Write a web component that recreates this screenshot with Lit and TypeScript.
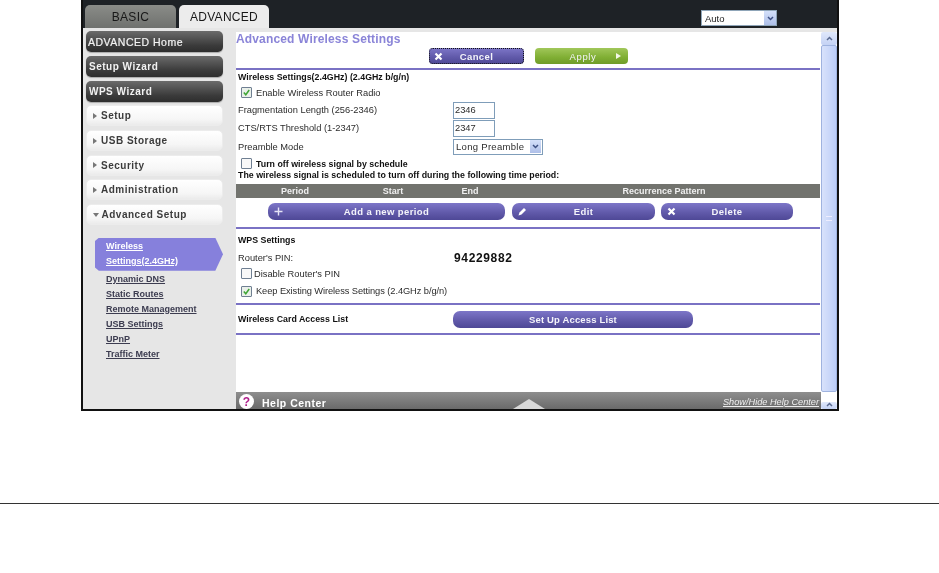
import { LitElement, html, css, svg } from "lit";
import { customElement } from "lit/decorators.js";

const X = svg`<svg class="ic" width="9" height="9" viewBox="0 0 9 9"><path d="M1.500 1.500l6 6M7.500 1.500l-6 6" stroke="#fff" stroke-width="2.200" fill="none"/></svg>`;
const TRI = svg`<svg class="ic" width="5" height="6" viewBox="0 0 5 6"><path d="M0 0l5 3L0 6z" fill="#f4f8e8"/></svg>`;
const PLUS = svg`<svg class="ic" width="9" height="9" viewBox="0 0 9 9"><path d="M4.500 0.500v8M0.500 4.500h8" stroke="#e6e4f6" stroke-width="1.400" fill="none"/></svg>`;
const PEN = svg`<svg class="ic" width="9" height="9" viewBox="0 0 9 9"><path d="M0.500 8.500l1-3L6 1l2 2-4.500 4.500z" fill="#fff"/></svg>`;
const CHECK = svg`<svg width="7" height="7" viewBox="0 0 7 7"><path d="M0.800 3.500l2 2.300L6.200 1" stroke="#3fa535" stroke-width="1.500" fill="none"/></svg>`;
const CHEV_D = svg`<svg width="7" height="5" viewBox="0 0 7 5"><path d="M1 1l2.500 2.500L6 1" stroke="#3c4f82" stroke-width="1.500" fill="none"/></svg>`;
const CHEV_U = svg`<svg width="7" height="5" viewBox="0 0 7 5"><path d="M1 4l2.500-2.500L6 4" stroke="#5a6a90" stroke-width="1.500" fill="none"/></svg>`;

@customElement("app-root")
export class AppRoot extends LitElement {
  static styles = css`
    :host { display: block; height: 573px; width: 939px; overflow: hidden; background: #fff; font-family: "Liberation Sans", Arial, sans-serif; color: #1c1c1c; }
    .frame { margin-left: 81px; width: 758px; height: 411px; box-sizing: border-box; border: solid #111; border-width: 0 2px 2px 2px; background: #e6e6e6; display: flex; flex-direction: column; overflow: hidden; filter: blur(0.3px); }
    .top { height: 28px; flex: none; background: #1e2226; display: flex; align-items: flex-end; padding-left: 2px; box-sizing: border-box; }
    .tab { height: 23px; box-sizing: border-box; border-radius: 5px 5px 0 0; font-size: 12px; display: flex; align-items: center; justify-content: center; letter-spacing: 0.300px; color: #181818; }
    .tab.basic { width: 91px; background: linear-gradient(#8a8c88, #6f716e); margin-right: 3px; }
    .tab.adv { width: 90px; background: #ececec; }
    .auto { margin-left: 432px; margin-bottom: 2px; width: 76px; height: 16px; box-sizing: border-box; border: 1px solid #8fa5b8; background: #fff; display: flex; align-items: center; justify-content: space-between; font-size: 9.500px; padding-left: 3px; }
    .drop { width: 12px; height: 14px; background: linear-gradient(#d4e0fa, #aebfe8); display: flex; align-items: center; justify-content: center; }
    .body { flex: 1; min-height: 0; display: flex; }
    .side { width: 153px; flex: none; padding: 3.200px 0 0 3px; box-sizing: border-box; display: flex; flex-direction: column; }
    .nav { width: 137px; height: 21px; box-sizing: border-box; border-radius: 5px; margin-bottom: 3.710px; flex: none; display: flex; align-items: center; font-size: 10px; font-weight: bold; letter-spacing: 0.500px; }
    .nav.dark { background: linear-gradient(#6b6b6b, #3a3a3a 70%, #2e2e2e); color: #f2f2f2; padding-left: 3px; box-shadow: 0 1px 1px #aaa; }
    .nav.dark.wide { font-weight: normal; font-size: 10.500px; letter-spacing: 0.500px; -webkit-text-stroke: 0.200px #f2f2f2; padding-left: 2px; }
    .nav.light { background: linear-gradient(#fff, #f6f6f6 70%, #ebebeb); color: #3c3c3c; border: 1px solid #ececec; padding-left: 6px; }
    .arrow { width: 0; height: 0; border-left: 4px solid #777; border-top: 3px solid transparent; border-bottom: 3px solid transparent; margin-right: 4px; }
    .arrow.open { border-top: 4px solid #777; border-left: 3px solid transparent; border-right: 3px solid transparent; border-bottom: 0; margin-right: 2.500px; }
    .sub { margin: 9px 0 0 9px; }
    .cur { width: 128px; height: 33px; background: #8680dc; clip-path: polygon(3% 0, 94% 0, 100% 50%, 94% 100%, 3% 100%, 0 90%, 0 10%); padding: 0 0 2px 11px; box-sizing: border-box; display: flex; flex-direction: column; justify-content: center; gap: 3px; color: #fff; font-size: 9px; font-weight: bold; line-height: 12px; text-decoration: underline; }
    .links { margin: 1px 0 0 11px; display: flex; flex-direction: column; }
    .links a { height: 15px; line-height: 15px; font-size: 9px; font-weight: bold; color: #3c3c50; text-decoration: underline; }
    .main { width: 585px; flex: none; margin-top: 4px; background: #fff; display: flex; flex-direction: column; position: relative; }
    .content { flex: 1; min-height: 0; padding-left: 2px; }
    h1 { margin: 0 0 0 -2px; height: 16px; line-height: 15px; font-size: 12px; font-weight: bold; color: #8a84d8; letter-spacing: 0.150px; white-space: nowrap; }
    .acts { height: 20px; display: flex; padding-left: 191px; gap: 11px; }
    .btn { height: 17px; box-sizing: border-box; border-radius: 4px; color: #f4f4fa; font-size: 9.500px; font-weight: bold; letter-spacing: 0.400px; display: flex; align-items: center; justify-content: center; position: relative; flex: none; background: linear-gradient(#7d76c8, #5f58a8 60%, #4e4896); }
    .btn .ic { position: absolute; left: 6px; top: 4px; }
    .btn.cancel { width: 95px; height: 16px; outline: 1px dotted #111; outline-offset: -1px; }
    .btn.cancel .ic { top: 3.500px; left: 5px; }
    .btn.apply { width: 93px; height: 16px; background: linear-gradient(#a1c75a, #7fae33 60%, #6f9c2a); font-weight: normal; letter-spacing: 0.600px; padding-left: 3px; }
    .btn.apply .ic { left: auto; right: 7px; top: 5px; }
    .hr { height: 2px; background: #7a72c4; flex: none; width: 584px; margin-left: -2px; }
    .row { display: flex; align-items: center; font-size: 9.300px; letter-spacing: 0; color: #2c2c2c; white-space: nowrap; box-sizing: border-box; }
    .row .lbl { width: 215px; flex: none; }
    .h-title { height: 14px; }
    .h-enable { height: 17px; }
    .h-frag { height: 18px; }
    .h-cts { height: 18px; }
    .h-pre { height: 19px; }
    .h-off { height: 15px; }
    .h-sched { height: 13px; padding-bottom: 5px; }
    .h-wps { height: 22px; }
    .h-pin { height: 13px; }
    .h-dis { height: 19px; }
    .h-keep { height: 16px; }
    .h-gap { height: 4px; }
    .h-card { height: 28px; }
    .shift { margin-left: -2px; }
    .keep { letter-spacing: -0.080px; }
    b, .row .bold { font-weight: bold; font-size: 8.800px; color: #111; letter-spacing: 0.020px; }
    .cb { width: 9px; height: 9px; border: 1px solid #6f7f92; background: #f8f8f8; flex: none; margin: 0 4px 0 3px; display: flex; align-items: center; justify-content: center; border-radius: 1px; }
    .cb.on { background: #eaf0ea; }
    .in { width: 42px; height: 17px; box-sizing: border-box; border: 1px solid #7f9db9; font-size: 9.300px; padding-left: 1px; display: flex; align-items: center; }
    .sel { width: 90px; height: 16px; box-sizing: border-box; border: 1px solid #7f9db9; display: flex; align-items: center; justify-content: space-between; padding-left: 2px; font-size: 9.500px; letter-spacing: 0.300px; }
    .sel .drop { width: 11px; height: 13px; margin-right: 1px; }
    .thead { height: 14px; background: #72736e; width: 584px; margin-left: -2px; display: grid; grid-template-columns: 118px 78px 76px 312px; color: #f0f0f0; font-size: 9px; font-weight: bold; text-align: center; line-height: 14px; }
    .btns { display: flex; height: 29px; padding: 5px 0 0 30px; box-sizing: border-box; }
    .btn.r { border-radius: 7px; }
    .w-add { width: 237px; margin-right: 7px; }
    .w-edit { width: 143px; margin-right: 6px; }
    .w-del { width: 132px; }
    .w-set { width: 240px; letter-spacing: 0.150px; }
    .pin { font-size: 12px; font-weight: bold; color: #111; letter-spacing: 0.650px; padding-left: 1px; }
    .bar { height: 17px; flex: none; background: linear-gradient(#8e8e8e, #6a6a6a); display: flex; align-items: center; color: #fff; position: relative; overflow: hidden; }
    .q { width: 15px; height: 15px; border-radius: 50%; background: #fff; color: #b0208c; font-size: 12px; font-weight: bold; display: flex; align-items: center; justify-content: center; margin: 2px 8px 0 3px; }
    .hc { font-size: 10.500px; font-weight: bold; letter-spacing: 0.500px; margin-top: 4px; }
    .tri { margin: 7px 0 0 187px; width: 0; height: 0; border-left: 16px solid transparent; border-right: 16px solid transparent; border-bottom: 10px solid #d8d8d8; }
    .sh { margin: 3px 2px 0 auto; font-size: 9.200px; font-style: italic; text-decoration: underline; color: #eee; }
    .scroll { width: 16px; flex: none; margin-top: 4px; background: #fff; display: flex; flex-direction: column; }
    .sb { height: 13px; flex: none; background: linear-gradient(#e0e8fb, #c4d2f4); display: flex; align-items: center; justify-content: center; border-radius: 2px; }
    .sb.end { height: 7px; align-items: flex-start; overflow: hidden; }
    .thumb { flex: 1; background: linear-gradient(90deg, #d8e2fb, #bccdf7); border: 1px solid #9fb3df; border-radius: 2px; margin: 0 0 10px; display: flex; align-items: center; justify-content: center; }
    .grip { width: 6px; height: 5px; border-top: 1px solid #eef; border-bottom: 1px solid #eef; box-sizing: border-box; }
    .page-rule { height: 1px; background: #333; margin-top: 92px; }
  `;

  private cb(on: boolean) {
    return html`<span class="cb ${on ? "on" : ""}">${on ? CHECK : ""}</span>`;
  }

  render() {
    return html`
      <div class="frame">
        <div class="top">
          <div class="tab basic">BASIC</div>
          <div class="tab adv">ADVANCED</div>
          <div class="auto">Auto<span class="drop">${CHEV_D}</span></div>
        </div>
        <div class="body">
          <div class="side">
            <div class="nav dark wide">ADVANCED Home</div>
            <div class="nav dark">Setup Wizard</div>
            <div class="nav dark">WPS Wizard</div>
            ${["Setup", "USB Storage", "Security", "Administration"].map(
              (t) => html`<div class="nav light"><span class="arrow"></span>${t}</div>`
            )}
            <div class="nav light"><span class="arrow open"></span>Advanced Setup</div>
            <div class="sub">
              <div class="cur"><span>Wireless</span><span>Settings(2.4GHz)</span></div>
              <div class="links">
                ${["Dynamic DNS", "Static Routes", "Remote Management", "USB Settings", "UPnP", "Traffic Meter"].map(
                  (t) => html`<a>${t}</a>`
                )}
              </div>
            </div>
          </div>
          <div class="main">
            <div class="content">
              <h1>Advanced Wireless Settings</h1>
              <div class="acts">
                <div class="btn cancel">${X}Cancel</div>
                <div class="btn apply">Apply${TRI}</div>
              </div>
              <div class="hr"></div>
              <div class="row h-title"><b>Wireless Settings(2.4GHz) (2.4GHz b/g/n)</b></div>
              <div class="row h-enable">${this.cb(true)}<span>Enable Wireless Router Radio</span></div>
              <div class="row h-frag"><span class="lbl">Fragmentation Length (256-2346)</span><span class="in">2346</span></div>
              <div class="row h-cts"><span class="lbl">CTS/RTS Threshold (1-2347)</span><span class="in">2347</span></div>
              <div class="row h-pre"><span class="lbl">Preamble Mode</span><span class="sel">Long Preamble<span class="drop">${CHEV_D}</span></span></div>
              <div class="row h-off">${this.cb(false)}<b>Turn off wireless signal by schedule</b></div>
              <div class="row h-sched"><b>The wireless signal is scheduled to turn off during the following time period:</b></div>
              <div class="thead"><span>Period</span><span>Start</span><span>End</span><span>Recurrence Pattern</span></div>
              <div class="btns">
                <div class="btn r w-add">${PLUS}Add a new period</div>
                <div class="btn r w-edit">${PEN}Edit</div>
                <div class="btn r w-del">${X}Delete</div>
              </div>
              <div class="hr"></div>
              <div class="row h-wps"><b>WPS Settings</b></div>
              <div class="row h-pin"><span class="lbl">Router's PIN:</span><span class="pin">94229882</span></div>
              <div class="row h-dis">${this.cb(false)}<span class="shift">Disable Router's PIN</span></div>
              <div class="row h-keep">${this.cb(true)}<span class="keep">Keep Existing Wireless Settings (2.4GHz b/g/n)</span></div>
              <div class="row h-gap"></div>
              <div class="hr"></div>
              <div class="row h-card"><span class="lbl bold">Wireless Card Access List</span><div class="btn r w-set">Set Up Access List</div></div>
              <div class="hr"></div>
            </div>
            <div class="bar">
              <span class="q">?</span><span class="hc">Help Center</span><span class="tri"></span><span class="sh">Show/Hide Help Center</span>
            </div>
          </div>
          <div class="scroll">
            <div class="sb">${CHEV_U}</div>
            <div class="thumb"><span class="grip"></span></div>
            <div class="sb end">${CHEV_U}</div>
          </div>
        </div>
      </div>
      <div class="page-rule"></div>
    `;
  }
}
